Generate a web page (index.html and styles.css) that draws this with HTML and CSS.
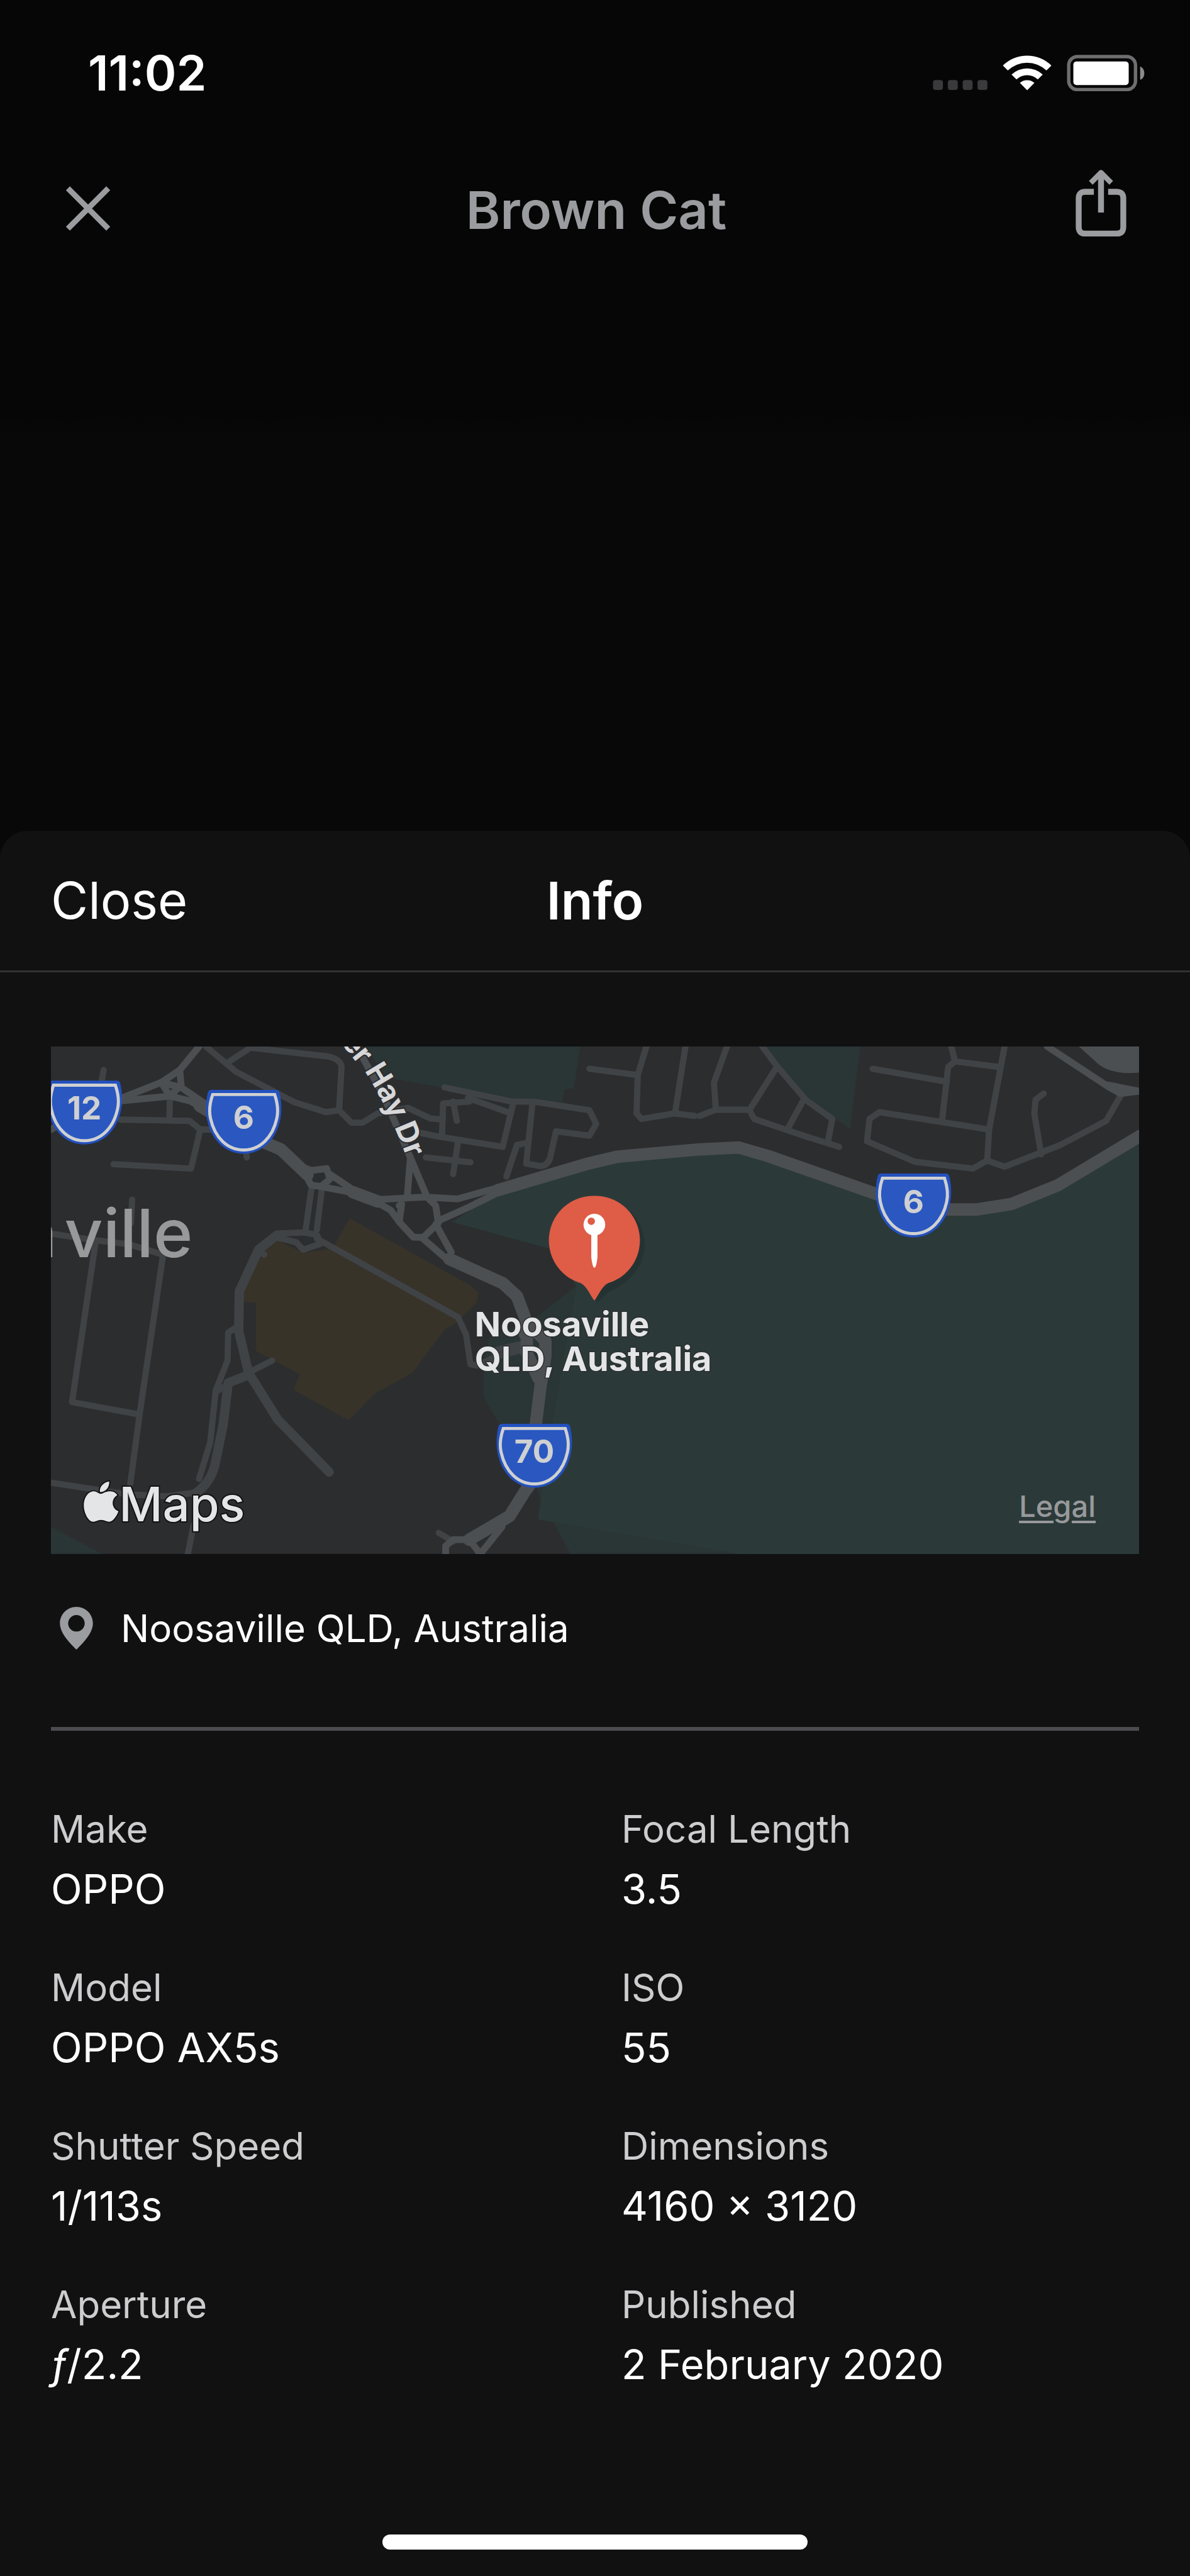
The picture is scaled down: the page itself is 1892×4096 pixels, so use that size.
FILE: index.html
```html
<!DOCTYPE html>
<html lang="en">
<head>
<meta charset="utf-8">
<meta name="viewport" content="width=device-width, initial-scale=1">
<title>Brown Cat – Info</title>
<link rel="stylesheet" href="styles.css">
</head>
<body>
<div class="screen">
  <div class="status">
    <time class="status-time">11:02</time>
    <svg class="status-icons" viewBox="1505 88 342 59" aria-hidden="true">
      <g fill="#3a3a3c">
        <rect x="1505" y="129" width="16" height="16" rx="4"/>
        <rect x="1529" y="129" width="16" height="16" rx="4"/>
        <rect x="1553" y="129" width="16" height="16" rx="4"/>
        <rect x="1577" y="129" width="16" height="16" rx="4"/>
      </g>
      <g fill="#fff">
        <path d="M1618 105.500 A56 56 0 0 1 1696.500 105.500 L1688.500 113.500 A45 45 0 0 0 1626 113.500 Z"/>
        <path d="M1632 120 A37 37 0 0 1 1682.500 120 L1674.500 128 A25 25 0 0 0 1640 128 Z"/>
        <path d="M1645.500 133.500 A18 18 0 0 1 1669 133.500 L1657.300 145.500 Z"/>
        <rect x="1732" y="99" width="89.500" height="38" rx="5"/>
      </g>
      <rect x="1724.500" y="91" width="108" height="53.500" rx="14" fill="none" stroke="#6e6e70" stroke-width="5.500"/>
      <path d="M1840 107 C1849 110 1849 126 1840 128.500 Z" fill="#8b8b8d"/>
    </svg>
  </div>

  <header class="nav">
    <button class="icon-btn" type="button" aria-label="Close photo">
      <svg class="icon-x" viewBox="0 0 76 92" aria-hidden="true"><path d="M3 10.500 L68 75.500 M68 10.500 L3 75.500" fill="none" stroke="#9b9c9f" stroke-width="9"/></svg>
    </button>
    <h1 class="nav-title">Brown Cat</h1>
    <button class="icon-btn" type="button" aria-label="Share">
      <svg class="icon-share" viewBox="0 0 82 131" aria-hidden="true">
        <g fill="none" stroke="#9b9c9f" stroke-width="9.500">
          <path d="M29.500 35.500 H15.500 Q5 35.500 5 46 V92.500 Q5 103 15.500 103 H66.500 Q77 103 77 92.500 V46 Q77 35.500 66.500 35.500 H52.500"/>
          <path d="M41 69 V8"/>
          <path d="M24.500 21 L41 4.500 L57.500 21" stroke-width="8.500" stroke-linejoin="round"/>
        </g>
      </svg>
    </button>
  </header>

  <div class="photo"></div>

  <main class="sheet">
    <header class="sheet-head">
      <button class="sheet-close" type="button">Close</button>
      <h2 class="sheet-title">Info</h2>
    </header>

    <div class="sheet-body">
      <div class="map">
        <svg class="map-art" viewBox="0 0 1756 819" role="img" aria-label="Map of Noosaville QLD, Australia">
          <defs>
            <g id="shield">
              <path d="M-52 0 H52 Q57 0 58 5 C61 18 62 34 59 48 C53 78 32 103 0 103 C-32 103 -53 78 -59 48 C-62 34 -61 18 -58 5 Q-57 0 -52 0 Z" fill="#2351bf"/>
              <path d="M-50 7.500 H50 C55 22 56 35 53.500 46 C47 76 27 97 0 97 C-27 97 -47 76 -53.500 46 C-56 35 -55 22 -50 7.500 Z" fill="#2a58c0" stroke="#cfd0d2" stroke-width="5"/>
            </g>
            <path id="hay" d="M408 -85 Q476 5 514 52 Q550 112 574 180"/>
          </defs>

          <rect width="1756" height="819" fill="#2c2d2f"/>
          <g fill="#2a3535">
            <path d="M509 0 L540 50 L618 64 L744 86 L825 90 L829 69 L844 68 L854 0 Z"/>
            <path d="M1150 0 L1217 80 L1261 114 L1290 133 L1306 0 Z"/>
            <path d="M0 775 L83 819 H0 Z"/>
            <path d="M783 437 L848 386 L811 620 L786 763 L790 729 L760 650 L725 611 L698 566 V510 L708 470 Z"/>
            <path d="M786 763 L811 768 L838 819 H1130 L1000 770 Z"/>
          </g>
          <path d="M647 283 L804 326 L848 386 L811 600 L786 763 L1112 819 H1756 V150 L1621 232 L1552 260 L1495 268 L1335 245 L1158 183 L1110 165 L1043 170 L863 195 L721 238 Z" fill="#2b3a39"/>
          <path d="M482 277 L678 386 L690 398 L687 414 L652 448 L636 456 L583 527 L523 560 L480 603 L391 554 L402 529 L331 492 V414 L311 412 V392 L335 339 L366 313 L407 333 L447 327 L458 319 Z" fill="#373329"/>
          <path d="M1659 0 L1692 30 Q1715 46 1756 42 V0 Z" fill="#4c4f52"/>

          <g class="minor">
            <path d="M250 0 L299 41 L393 90 L444 106 L465 103 L485 123 H503 L527 108 L576 99 L612 116 L632 118"/>
            <path d="M288 24 L322 2 L447 16 Q466 20 469 32 L465 103"/>
            <path d="M85 38 L82 55 M192 83 L191 118 M112 118 L224 120 L241 134 H262 M241 134 L226 197 L101 190 M316 179 L314 165 M131 247 L129 285"/>
            <path d="M0 302 L74 313 L125 319 L181 336 L143 594 L128 706 M72 316 L34 574 L143 594"/>
            <path d="M0 704 L125 723 L188 726 L232 720 M230 773 L221 819"/>
            <path d="M239 698 L257 639 L266 555 L285 507 L286 462 L302 451 M270 555 L308 532 L357 507 M344 336 L335 330"/>
            <path d="M420 232 L411 296 M437 232 L429 296 M364 302 L408 300 L429 304 L436 318 L407 328 L396 316 L364 308"/>
            <path d="M429 310 L657 437 L670 465 L677 513 L689 515 L717 501 L760 490 M717 490 L760 480"/>
            <path d="M635 66 L744 89 H779 L869 103 L880 125 L869 144 L815 137 L806 178 Q803 192 790 193 L767 189 L777 92"/>
            <path d="M673 83 L737 106 M631 145 L633 92 L675 89 M649 89 L655 120 M594 139 L618 144 L729 162 L746 92 M735 210 L752 159 L765 156 M605 179 L677 187 M657 153 L649 206"/>
            <path d="M869 36 L947 46 M961 0 L947 46 L945 108 L953 117 L1006 108 L1039 112 M1024 0 L1007 108"/>
            <path d="M1047 112 L1073 102 H1127 L1135 117 L1218 145 L1272 162 M1091 0 L1070 58 L1073 102 M1148 0 L1172 32 L1218 86 L1261 117 L1254 153 M1172 32 L1127 103 M1213 89 L1190 131"/>
            <path d="M1326 36 L1446 57 M1453 0 L1459 24 L1448 33 L1438 120 M1459 24 L1530 33 M1539 0 L1514 134 L1511 184"/>
            <path d="M1514 134 L1337 106 L1321 117 L1317 153 L1394 186 L1488 197 L1511 184 L1539 194 L1629 159 L1703 120 L1726 80 M1602 76 L1589 86 L1587 108 L1598 174"/>
            <path d="M626 785 L649 799"/>
          </g>
          <g class="minor minor-wide">
            <path d="M364 305 L335 328 L304 395 L303 459 L319 527 L366 602 L449 687 M319 530 L286 543 L278 610 L264 678 Q256 706 232 722"/>
          </g>

          <g class="major">
            <path d="M0 134 L50 105 L112 84 L178 58 L208 38 L239 0 M178 58 L192 80 L210 62 L208 38 M112 88 L192 80 L225 88 L246 100 M178 58 L210 66 L260 100"/>
            <path d="M407 195 L420 200 L445 197 L450 214 L436 226 L420 224 L407 200 M450 206 L487 231 L527 250 M436 226 L487 236"/>
            <path d="M527 247 L603 243 L656 246 L721 228 M562 257 L566 254 L562 283 L585 308 H601 L625 285 L621 257 L607 243 M626 281 L675 259 L721 236 M527 252 L548 264 L562 283"/>
            <path d="M500 12 L536 78 L580 179 L575 243 M580 179 L607 243 M598 308 L643 347 M621 287 L646 332"/>
            <path d="M637 819 V806 L649 796 H675 L693 819 L728 775"/>
            <path d="M1608 0 L1705 64 L1726 76 L1756 72 M1705 62 L1756 72"/>
          </g>
          <g class="major major-wide">
            <path d="M721 232 L863 190 L913 178 L1047 166 L1110 163 L1158 177 L1335 239 L1400 260 L1448 263 H1495 L1551 254 L1625 224 L1758 144"/>
            <path d="M240 96 L335 151 L371 166 L414 207"/>
            <path d="M487 235 L527 250"/>
            <path d="M643 343 L729 382 L752 403 L766 440 L765 465 M773 450 L798 475 V500 L790 549 L781 622 L778 700 L765 718 L740 758 L675 796"/>
            <path d="M768 470 V495 L787 536"/>
          </g>

          <use href="#shield" x="54" y="55"/>
          <use href="#shield" x="311" y="70"/>
          <use href="#shield" x="1392" y="205"/>
          <use href="#shield" x="780" y="609"/>
          <g class="route">
            <text x="54" y="118">12</text>
            <text x="311" y="133">6</text>
            <text x="1392" y="269">6</text>
            <text x="780" y="672">70</text>
          </g>

          <text class="town" x="10" y="340">Noosa</text>
          <text class="town" x="229" y="340">ville</text>
          <text class="street"><textPath href="#hay" startOffset="100%">Walter Hay Dr</textPath></text>

          <path d="M885 248 C925 248 958 278 958 320 C958 358 930 384 900 396 L880 416 Z" fill="#000" opacity=".12"/>
          <path d="M877 241 A72 72 0 0 1 899 382 C888 388 884 402 877 410 C870 402 866 388 855 382 A72 72 0 0 1 877 241 Z" fill="#df5c47"/>
          <circle cx="877" cy="287.500" r="17.500" fill="#fff"/>
          <circle cx="872" cy="282" r="6" fill="#df5c47"/>
          <path d="M872 302 H882 V340 Q880 357 877 357 Q874 357 872 340 Z" fill="#fff"/>
          <text class="place" x="684" y="468">Noosaville</text>
          <text class="place" x="684" y="524">QLD, Australia</text>

          <g class="maps-logo">
            <path d="M94 702 C95 712 87 720 79 719 C78 710 86 703 94 702 Z M80 722 C84 722 89 717 96 718 C101 718 105 721 107 724 C96 731 98 746 109 750 C106 758 100 767 94 767 C89 767 87 764 81 764 C75 764 73 767 68 767 C60 767 53 752 53 741 C53 727 61 718 69 718 C74 718 77 722 80 722 Z"/>
            <text x="110" y="766">Maps</text>
          </g>
        </svg>
        <a class="legal" href="#legal">Legal</a>
      </div>

      <p class="location">
        <svg class="location-pin" viewBox="0 0 54 70" aria-hidden="true"><path fill-rule="evenodd" d="M27 0 C42 0 54 12 54 27 C54 43 38 59 27 70 C16 59 0 43 0 27 C0 12 12 0 27 0 Z M27 13.500 A13.500 13.500 0 1 0 27 40.500 A13.500 13.500 0 1 0 27 13.500 Z" fill="#9b9c9f"/></svg>
        Noosaville QLD, Australia
      </p>

      <dl class="facts">
        <div class="fact"><dt>Make</dt><dd>OPPO</dd></div>
        <div class="fact"><dt>Focal Length</dt><dd>3.5</dd></div>
        <div class="fact"><dt>Model</dt><dd>OPPO AX5s</dd></div>
        <div class="fact"><dt>ISO</dt><dd>55</dd></div>
        <div class="fact"><dt>Shutter Speed</dt><dd>1/113s</dd></div>
        <div class="fact"><dt>Dimensions</dt><dd>4160 × 3120</dd></div>
        <div class="fact"><dt>Aperture</dt><dd><i>ƒ</i>/2.2</dd></div>
        <div class="fact"><dt>Published</dt><dd>2 February 2020</dd></div>
      </dl>
    </div>
    <div class="home-bar"></div>
  </main>
</div>
</body>
</html>
```
FILE: styles.css
```css
* { box-sizing: border-box; }

body {
  margin: 0;
  background: #060606;
  color: #fff;
  font-family: Inter, "Liberation Sans", sans-serif;
}

h1, h2, p, dl, dd { margin: 0; }

button {
  padding: 0;
  border: 0;
  background: none;
  color: inherit;
  font: inherit;
}

svg { display: block; }

.screen {
  display: flex;
  flex-direction: column;
  min-height: 100vh;
  background: linear-gradient(#060606 660px, #080808 690px);
}

/* Status bar */
.status {
  display: flex;
  align-items: center;
  justify-content: space-between;
  height: 232px;
  padding: 0 72px 0 140px;
}
.status-time { font-size: 77px; font-weight: 600; }
.status-icons { width: 337px; height: 58px; }

/* Photo viewer bar */
.nav {
  display: grid;
  grid-template-columns: 1fr auto 1fr;
  align-items: center;
  height: 204px;
  padding: 0 101px 0 105px;
}
.nav-title { font-size: 83px; font-weight: 600; color: #9b9c9f; }
.icon-btn:last-child { justify-self: end; }
.icon-btn:first-child { justify-self: start; }
.icon-x { width: 75px; height: 91px; }
.icon-share { width: 81px; height: 129px; }

.photo { height: 885px; }

/* Info sheet */
.sheet {
  display: flex;
  flex: 1;
  flex-direction: column;
  border-radius: 44px 44px 0 0;
  background: #111;
}
.sheet-head {
  display: grid;
  grid-template-columns: 1fr auto 1fr;
  align-items: center;
  height: 225px;
  padding: 0 81px;
  border-bottom: 3px solid #323234;
}
.sheet-close { justify-self: start; font-size: 81px; }
.sheet-title { font-size: 83px; font-weight: 600; }
.sheet-body { padding: 118px 81px 0; }

/* Map */
.map { position: relative; overflow: hidden; }
.map-art { width: 100%; }
.minor, .major { fill: none; stroke-linecap: round; stroke-linejoin: round; }
.minor { stroke: #404346; stroke-width: 10; }
.minor-wide { stroke-width: 15; }
.major { stroke: #4c4f52; stroke-width: 11; }
.major-wide { stroke-width: 20; }
.route { fill: #cfd0d2; font-size: 52px; font-weight: 700; text-anchor: middle; }
.town { fill: #98999b; font-size: 108px; font-weight: 500; text-anchor: end; }
.street {
  fill: #d6d7d9;
  stroke: #2c2d2f;
  stroke-width: 4;
  paint-order: stroke;
  font-size: 48px;
  font-weight: 700;
  text-anchor: end;
}
.place {
  fill: #e4e5e7;
  stroke: #2c2d2f;
  stroke-width: 3;
  paint-order: stroke;
  font-size: 55px;
  font-weight: 700;
}
.maps-logo {
  fill: #e4e5e7;
  stroke: #111;
  stroke-width: 4;
  paint-order: stroke;
  font-size: 77px;
  font-weight: 500;
}
.legal {
  position: absolute;
  right: 69px;
  bottom: 48px;
  color: #98999b;
  font-size: 47px;
  font-weight: 500;
  text-decoration-thickness: 4px;
  text-underline-offset: 6px;
}

/* Place line */
.location {
  display: flex;
  align-items: center;
  gap: 44px;
  padding: 82px 14px 121px;
  border-bottom: 6px solid #4b4b50;
  font-size: 60px;
  line-height: 72px;
}
.location-pin { width: 53px; height: 68px; }

/* Photo details */
.facts {
  display: grid;
  grid-template-columns: 1fr 1fr;
  gap: 72px 84px;
  padding-top: 116px;
}
.fact { display: grid; gap: 12px; }
dt { color: #cdcdcf; font-size: 60px; line-height: 80px; }
dd { font-size: 65px; line-height: 88px; }

.home-bar {
  width: 676px;
  height: 24px;
  margin: auto auto 42px;
  border-radius: 12px;
  background: #fff;
}
```
